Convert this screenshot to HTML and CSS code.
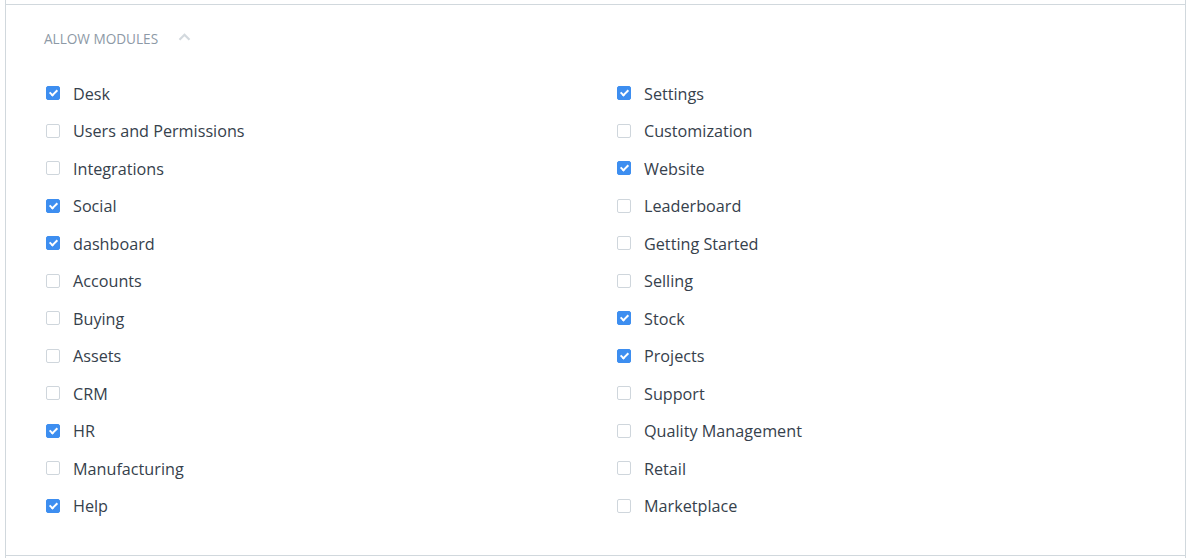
FILE: index.html
```html
<!DOCTYPE html>
<html>
<head>
<meta charset="utf-8">
<link rel="stylesheet" href="styles.css">
</head>
<body>
<div class="frame">
  <section class="section">
    <div class="section-head">
      <span class="section-title">ALLOW MODULES</span>
      <svg class="chev" width="13" height="8" viewBox="0 0 13 8"><path d="M1.5 6.8 L6.5 1.8 L11.5 6.8" fill="none" stroke="#d3d9de" stroke-width="2.2"/></svg>
    </div>
    <div class="grid">
      <div class="col">
        <label class="row"><span class="cb on"></span><span class="lbl">Desk</span></label>
        <label class="row"><span class="cb"></span><span class="lbl">Users and Permissions</span></label>
        <label class="row"><span class="cb"></span><span class="lbl">Integrations</span></label>
        <label class="row"><span class="cb on"></span><span class="lbl">Social</span></label>
        <label class="row"><span class="cb on"></span><span class="lbl">dashboard</span></label>
        <label class="row"><span class="cb"></span><span class="lbl">Accounts</span></label>
        <label class="row"><span class="cb"></span><span class="lbl">Buying</span></label>
        <label class="row"><span class="cb"></span><span class="lbl">Assets</span></label>
        <label class="row"><span class="cb"></span><span class="lbl">CRM</span></label>
        <label class="row"><span class="cb on"></span><span class="lbl">HR</span></label>
        <label class="row"><span class="cb"></span><span class="lbl">Manufacturing</span></label>
        <label class="row"><span class="cb on"></span><span class="lbl">Help</span></label>
      </div>
      <div class="col">
        <label class="row"><span class="cb on"></span><span class="lbl">Settings</span></label>
        <label class="row"><span class="cb"></span><span class="lbl">Customization</span></label>
        <label class="row"><span class="cb on"></span><span class="lbl">Website</span></label>
        <label class="row"><span class="cb"></span><span class="lbl">Leaderboard</span></label>
        <label class="row"><span class="cb"></span><span class="lbl">Getting Started</span></label>
        <label class="row"><span class="cb"></span><span class="lbl">Selling</span></label>
        <label class="row"><span class="cb on"></span><span class="lbl">Stock</span></label>
        <label class="row"><span class="cb on"></span><span class="lbl">Projects</span></label>
        <label class="row"><span class="cb"></span><span class="lbl">Support</span></label>
        <label class="row"><span class="cb"></span><span class="lbl">Quality Management</span></label>
        <label class="row"><span class="cb"></span><span class="lbl">Retail</span></label>
        <label class="row"><span class="cb"></span><span class="lbl">Marketplace</span></label>
      </div>
    </div>
  </section>
</div>
</body>
</html>
```

FILE: styles.css
```css
html, body { margin: 0; padding: 0; background: #fff; }
body { font-family: "Open Sans", "Noto Sans", sans-serif; color: #36414c; }
.frame {
  margin: 0 3px 0 5px;
  border-left: 1px solid #d1d8dd;
  border-right: 1px solid #d1d8dd;
  height: 558px;
  box-sizing: border-box;
  padding-top: 4px;
}
.section {
  border-top: 1px solid #d1d8dd;
  border-bottom: 1px solid #d1d8dd;
  height: 552px;
  box-sizing: border-box;
  padding: 0 0 0 38px;
}
.section-head {
  display: flex;
  align-items: center;
  height: 60px;
  padding-top: 7px;
  padding-bottom: 1px;
  box-sizing: border-box;
}
.section-title {
  font-size: 13.6px;
  color: #8d99a6;
}
.chev { margin-left: 20px; margin-top: -3px; }
.grid {
  display: grid;
  grid-template-columns: 571px 1fr;
  margin-top: 10px;
}
.col { display: flex; flex-direction: column; }
.row {
  display: flex;
  align-items: center;
  height: 37.5px;
}
.cb {
  width: 12px;
  height: 12px;
  border: 1px solid #cfd6dc;
  border-radius: 2px;
  margin-left: 2px;
  margin-right: 13px;
  margin-top: -1px;
  flex: none;
  position: relative;
}
.cb.on {
  background: #3d8ef0;
  border-color: #3d8ef0;
}
.cb.on::after {
  content: "";
  position: absolute;
  left: 3.5px;
  top: 1px;
  width: 3px;
  height: 6px;
  border: solid #fff;
  border-width: 0 2px 2px 0;
  transform: rotate(45deg);
}
.lbl { font-size: 16.2px; }
```
